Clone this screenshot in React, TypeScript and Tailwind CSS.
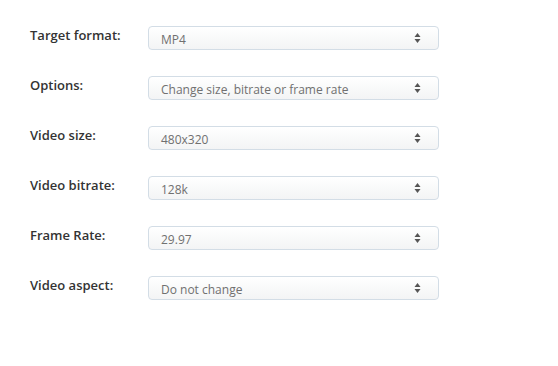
import React from 'react';

const rows = [
  { label: 'Target format:', value: 'MP4' },
  { label: 'Options:', value: 'Change size, bitrate or frame rate' },
  { label: 'Video size:', value: '480x320' },
  { label: 'Video bitrate:', value: '128k' },
  { label: 'Frame Rate:', value: '29.97' },
  { label: 'Video aspect:', value: 'Do not change' },
];

const Arrows = () => (
  <svg width="7" height="12" viewBox="0 0 7 12" className="text-[#555]">
    <path d="M3.5 1 L6.5 5 L0.5 5 Z" fill="currentColor" />
    <path d="M3.5 11 L6.5 7 L0.5 7 Z" fill="currentColor" />
  </svg>
);

export default function App() {
  return (
    <div
      className="w-[558px] h-[366px] bg-white pt-[26px] pl-[30px]"
      style={{ fontFamily: '"Open Sans", sans-serif' }}
    >
      <div className="flex flex-col gap-[26px]">
        {rows.map((row) => (
          <div key={row.label} className="flex items-center">
            <div className="w-[118px] text-[13px] font-semibold text-[#333] -mt-[4px]">{row.label}</div>
            <div className="w-[291px] h-[24px] flex items-center justify-between pl-[12px] pr-[17px] rounded-[4px] border border-[#d3dde6] bg-gradient-to-b from-white to-[#f3f4f5] text-[12px] text-[#707070]">
              <span className="pt-[3px]">{row.value}</span>
              <Arrows />
            </div>
          </div>
        ))}
      </div>
    </div>
  );
}
